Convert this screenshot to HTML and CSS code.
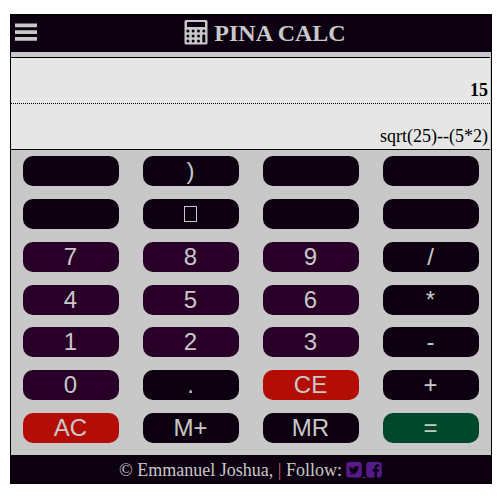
FILE: index.html
```
<!DOCTYPE html>
<html lang="en">
<head>
<meta charset="utf-8">
<title>Pina Calc</title>
<link rel="stylesheet" href="styles.css">
</head>
<body>
<main class="calculator">
  <header class="header">
    <svg class="menu" viewBox="0 0 22 18" aria-hidden="true"><path d="M0 .6h22v3.7H0zM0 7.3h22V11H0zM0 14h22v3.7H0z"/></svg>
    <h1 class="title">
      <svg class="calc-icon" viewBox="0 0 24 25" aria-hidden="true">
        <path fill-rule="evenodd" d="M2 0h20q1.500 0 1.500 1.500v21.500q0 1.500-1.500 1.500H2q-1.500 0-1.500-1.500V1.500Q.5 0 2 0zM3 2v5h18V2z"/>
        <g class="keys">
          <circle cx="3.900" cy="11" r="1.500"/><circle cx="9.100" cy="11" r="1.500"/><circle cx="14.500" cy="11" r="1.500"/><circle cx="19.800" cy="11" r="1.500"/>
          <circle cx="3.900" cy="16" r="1.500"/><circle cx="9.100" cy="16" r="1.500"/><circle cx="14.500" cy="16" r="1.500"/>
          <circle cx="3.900" cy="21" r="1.500"/><circle cx="9.100" cy="21" r="1.500"/><circle cx="14.500" cy="21" r="1.500"/>
          <rect x="18.300" y="14.500" width="3" height="8" rx="1.300"/>
        </g>
      </svg>
      <span>PINA CALC</span>
    </h1>
  </header>
  <section class="display">
    <div class="result">15</div>
    <div class="entry">sqrt(25)--(5*2)</div>
  </section>
  <section class="keypad">
    <button class="key"></button><button class="key">)</button><button class="key"></button><button class="key"></button>
    <button class="key"></button><button class="key"><span class="missing"></span></button><button class="key"></button><button class="key"></button>
    <button class="key digit">7</button><button class="key digit">8</button><button class="key digit">9</button><button class="key">/</button>
    <button class="key digit">4</button><button class="key digit">5</button><button class="key digit">6</button><button class="key">*</button>
    <button class="key digit">1</button><button class="key digit">2</button><button class="key digit">3</button><button class="key">-</button>
    <button class="key digit">0</button><button class="key">.</button><button class="key clear">CE</button><button class="key">+</button>
    <button class="key clear">AC</button><button class="key">M+</button><button class="key">MR</button><button class="key equals">=</button>
  </section>
  <footer class="footer">
    <span>© Emmanuel Joshua, <span class="bar">|</span> Follow:</span>
    <span class="social">
      <svg viewBox="128 128 1536 1536" aria-hidden="true"><path d="M1408 610q-56 25-121 34 68-40 93-117-65 38-134 51-61-66-153-66-87 0-148.500 61.500t-61.500 148.500q0 29 5 48-129-7-242-65t-192-155q-29 50-29 106 0 114 91 175-47-1-100-26v2q0 75 50 133.500t123 72.500q-29 8-51 8-13 0-39-4 21 63 74.500 104t121.500 42q-116 90-261 90-26 0-50-3 148 94 322 94 112 0 210-35.500t168-95 120.500-137 75-162 24.500-168.500q0-18-1-27 63-45 105-109zm256-194v960q0 119-84.500 203.500t-203.500 84.500h-960q-119 0-203.500-84.500t-84.500-203.500v-960q0-119 84.500-203.500t203.500-84.500h960q119 0 203.500 84.500t84.500 203.500z"/></svg>
      <span class="link-gap"></span>
      <svg viewBox="128 128 1536 1536" aria-hidden="true"><path d="M1376 128q119 0 203.500 84.500t84.500 203.500v960q0 119-84.500 203.500t-203.500 84.500h-188v-595h199l30-232h-229v-148q0-56 23.500-84t91.500-28l122-1v-207q-63-9-178-9-136 0-217.500 80t-81.500 226v171h-200v232h200v595h-532q-119 0-203.500-84.500t-84.500-203.500v-960q0-119 84.500-203.500t203.500-84.500h960z"/></svg>
    </span>
  </footer>
</main>
</body>
</html>
```
FILE: styles.css
```
* { box-sizing: border-box; }

body {
  margin: 0;
  padding: 14px 10px 0;
  background: #fff;
  font-family: "Liberation Serif", serif;
}

.calculator {
  display: flex;
  flex-direction: column;
  width: 482px;
  height: 470px;
  border: 1px solid #000;
  background: #c8c8c8;
}

.header {
  display: grid;
  grid-template-columns: 30px 1fr 2px;
  height: 37px;
  padding: 0 4px;
  background: #0d0010;
}

.menu {
  width: 22px;
  height: 18px;
  margin-top: 8px;
  fill: #c8c8c8;
}

.title {
  display: flex;
  justify-content: center;
  gap: 6px;
  margin: 0;
  color: #c8c8c8;
  font-size: 24px;
  line-height: 36px;
  white-space: nowrap;
}

.calc-icon {
  width: 24px;
  height: 25px;
  margin-top: 5px;
  fill: #c8c8c8;
}

.keys { fill: #0d0010; }

.display {
  height: 93px;
  margin: 5px 1px 0 0;
  border: solid #000;
  border-width: 1px 0;
  background: #e6e6e6;
  color: #000;
  font-size: 18px;
  line-height: 20px;
  text-align: right;
}

.result {
  height: 46px;
  padding: 22px 2px 0;
  border-bottom: 1px dotted #000;
  font-weight: bold;
}

.entry { padding: 22px 2px 0; }

.keypad {
  display: grid;
  grid-template-columns: repeat(4, 96px);
  grid-auto-rows: 30px;
  gap: 12.8px 24px;
  height: 305px;
  padding: 6.15px 12px 0;
}

.key {
  display: flex;
  align-items: center;
  justify-content: center;
  padding: 0 1px 0 0;
  border: 0;
  border-radius: 10px;
  background: #0d0010;
  color: #c8c8c8;
  font: 24px/30px "Liberation Sans", sans-serif;
}

.digit { background: #280028; }
.clear { background: #b40d05; }
.equals { background: #00482b; }

.missing {
  width: 13px;
  height: 16px;
  border: 1px solid #c8c8c8;
}

.footer {
  display: flex;
  justify-content: center;
  gap: 4px;
  height: 28px;
  padding-right: 1px;
  background: #0d0010;
  color: #c8c8c8;
  font-size: 18px;
  line-height: 30px;
}

.bar { color: #c86464; }

.social {
  display: flex;
  height: 16px;
  margin-top: 7px;
}

.social svg {
  width: 16px;
  height: 15.5px;
  fill: #551a8b;
}

.link-gap {
  width: 4px;
  border-bottom: 1px solid #551a8b;
}
```
